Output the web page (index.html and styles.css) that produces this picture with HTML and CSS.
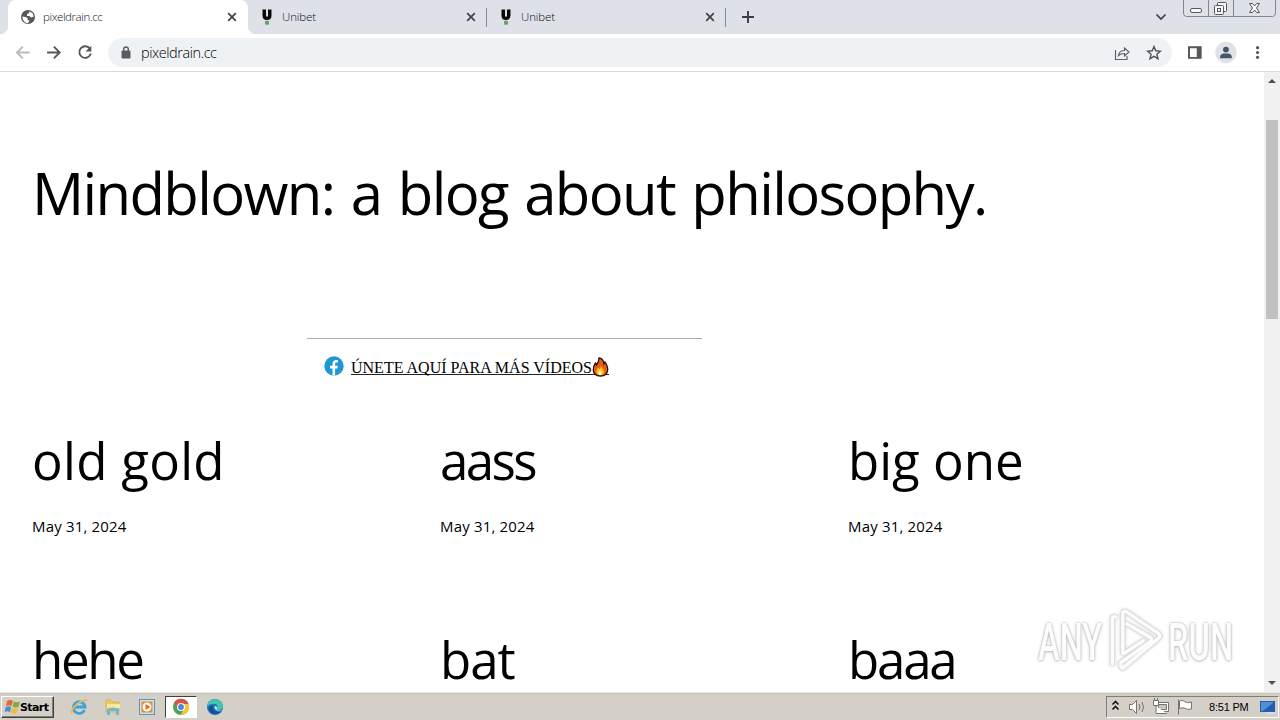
FILE: index.html
```html
<!DOCTYPE html>
<html lang="en">
<head>
<meta charset="utf-8">
<title>pixeldrain.cc</title>
<link rel="stylesheet" href="styles.css">
</head>
<body>
<svg class="defs" width="0" height="0">
  <symbol id="close" viewBox="0 0 10 10"><path d="M1.2 1.2 8.8 8.8M8.8 1.2 1.2 8.8" stroke="#3f4247" stroke-width="1.7" fill="none"/></symbol>
  <symbol id="unibet" viewBox="0 0 16 16"><path d="M3.500 .5H7v6q0 1.300 1 1.300T9 6.500v-6h3.500v6q0 4.500-4.500 4.500T3.500 6.500z" fill="#080808"/><rect x="6" y="11.700" width="4" height="4" rx="1" fill="#62a566"/></symbol>
</svg>
<header class="tabs">
  <div class="tab active">
    <svg class="favicon" viewBox="0 0 16 16"><circle cx="8" cy="8" r="7" fill="#55585c"/><path d="M2.500 7.500 5.500 8l2 1v2l2 .5-1.500 2.700C4.500 14 2.300 11 2.500 7.500zM9 2.500l3.500 1.500 1.300 3.500L11 8.500 9.500 7H7V5l2-.7z" fill="#fff"/></svg>
    <span class="title first-title">pixeldrain.cc</span><svg class="close"><use href="#close"/></svg>
  </div>
  <div class="tab"><svg class="favicon"><use href="#unibet"/></svg><span class="title">Unibet</span><svg class="close"><use href="#close"/></svg></div>
  <div class="tab"><svg class="favicon"><use href="#unibet"/></svg><span class="title">Unibet</span><svg class="close"><use href="#close"/></svg></div>
  <svg class="plus" viewBox="0 0 12 12"><path d="M6 0v12M0 6h12" stroke="#393c42" stroke-width="1.900"/></svg>
  <svg class="chevron" viewBox="0 0 12 8"><path d="m1.500 1.500 4.500 4.500 4.500-4.500" fill="none" stroke="#3e4147" stroke-width="1.700"/></svg>
  <svg class="window-controls" viewBox="0 0 94 18"><path d="M.5 0v13q0 3.500 3 3.500h86q3 0 3-3.500V0M25.500 0v16M50.500 0v16" fill="none" stroke="#83878e"/><g fill="#f7f7f8" stroke="#55585e"><rect x="7.500" y="8.500" width="11" height="4" rx="1.500"/><rect x="34.500" y="2.500" width="9" height="9" rx="1"/><rect x="31.500" y="5.500" width="9" height="9" rx="1"/><rect x="34.500" y="8.500" width="3" height="3"/><path d="M66.500 3.500h3l2 2.500 2-2.500h3L73.500 8l3 4.500h-3l-2-2.500-2 2.500h-3l3-4.500z"/></g></svg>
</header>
<nav class="toolbar">
  <svg class="navicons" viewBox="0 0 100 36"><g fill="none" stroke-width="1.900"><path d="M29 18H16m6-6-6 6 6 6" stroke="#b9babc"/><path d="M47 18h13m-6-6 6 6-6 6" stroke="#55575b"/><path d="M91 14a6 6 0 1 0 1 5" stroke="#55575b"/></g><path d="M92.500 11v6h-6z" fill="#55575b"/></svg>
  <div class="omnibox">
    <svg class="lock" viewBox="0 0 10 13"><rect x=".5" y="4.500" width="9" height="8" rx="1" fill="#595b60"/><path d="M2.700 5V3.300a2.300 2.300 0 0 1 4.600 0V5" fill="none" stroke="#595b60" stroke-width="1.400"/></svg>
    <span class="url">pixeldrain.cc</span>
    <svg class="share" viewBox="0 0 16 16"><path d="M1.500 5v9.500H13V11M4.500 10.500c.5-3.500 2.500-5 6-5V3L15 7l-4.500 4V8.500c-3 0-4.500.5-6 2z" fill="none" stroke="#5f6267" stroke-width="1.200"/></svg>
    <svg class="star" viewBox="0 0 16 16"><path d="m8 1.600 1.800 4.200 4.600.4-3.500 3 1.100 4.500L8 11.300l-4 2.400 1.100-4.500-3.500-3 4.600-.4z" fill="none" stroke="#505359" stroke-width="1.400"/></svg>
  </div>
  <svg class="tools" viewBox="0 0 90 36"><path d="M9 12.500h12v11H9z" fill="#fff" stroke="#55575b" stroke-width="2"/><path d="M17 12h4v12h-4z" fill="#55575b"/><circle cx="47" cy="18" r="11" fill="#dfe2e7"/><circle cx="47" cy="15" r="3" fill="#46536c"/><path d="M41 24v-1.500c0-3 3-3.500 6-3.500s6 .5 6 3.500V24z" fill="#46536c"/><g fill="#505359"><circle cx="79.500" cy="13" r="1.600"/><circle cx="79.500" cy="18" r="1.600"/><circle cx="79.500" cy="23" r="1.600"/></g></svg>
</nav>
<div class="viewport">
  <main>
    <h1>Mindblown: a blog about philosophy.</h1>
    <div class="promo">
      <svg class="facebook" viewBox="0 0 20 20"><circle cx="10" cy="10" r="9.700" fill="#1b98d5"/><path d="M8.500 19.500v-7H6V9.700h2.500V8c0-3 1.500-4.100 3.700-4.100l1.700.2v2.300h-1.300c-1.200 0-1.500.6-1.500 1.500v1.800h2.700l-.5 2.800h-2.200v7z" fill="#fff"/></svg>
      <a href="#">ÚNETE AQUÍ PARA MÁS VÍDEOS<svg class="fire" viewBox="0 0 17 20"><path d="M7 1c4 .5 4.500 3 5 6l1-2c2 3 3 5 2.700 8-.4 4-3 6-7.200 6s-7-2-7.200-6C1 9.500 2.200 8 3.500 6l1 2C6 6 7 4 7 1z" fill="#eb5b14" stroke="#251109" stroke-width="1.300"/><path d="M8.500 8c.2 3 3.500 3 3.500 6.800 0 2.400-1.500 3.500-3.700 3.500S4.500 17 4.500 14.500c0-2 1-3 2-4l.8 1.500C8.500 11 8.800 9.500 8.500 8z" fill="#ffbd20"/><path d="M8 13c2 1.500 2.500 5 .5 5S5.500 16 8 13z" fill="#fff4a0"/></svg></a>
    </div>
    <section class="posts">
      <article><h2 class="t-old">old gold</h2><time>May 31, 2024</time></article>
      <article><h2 class="t-aass">aass</h2><time>May 31, 2024</time></article>
      <article><h2 class="t-big">big one</h2><time>May 31, 2024</time></article>
      <article><h2 class="t-hehe">hehe</h2></article>
      <article><h2 class="t-bat">bat</h2></article>
      <article><h2 class="t-baaa">baaa</h2></article>
    </section>
  </main>
  <aside class="scrollbar"><i class="up"></i><i class="thumb"></i><i class="down"></i></aside>
  <div class="watermark"><span class="mark any">ANY</span><svg viewBox="0 0 64 68"><path d="M8 60V10q0-3 5-1M19 49V5q0-4 4-2l34 23q3 3 0 5L20 62q-3 2-3-2v-3l31-22q3-3 0-5L22 15M19 48l23-15" fill="none" stroke="#dedede" stroke-width="5.500"/><path d="M8 60V10q0-3 5-1M19 49V5q0-4 4-2l34 23q3 3 0 5L20 62q-3 2-3-2v-3l31-22q3-3 0-5L22 15M19 48l23-15" fill="none" stroke="#fcfcfc" stroke-width="3.500"/></svg><span class="mark run">RUN</span></div>
</div>
<footer class="taskbar">
  <button class="start"><svg viewBox="0 0 17 16"><path d="M3 2q3-2 6 0L7.500 7q-3-1.500-5.500 0z" fill="#ed6430"/><path d="M10 2.500q3 1.500 6 0L14.500 8q-3 1-6-.5z" fill="#7cac45"/><path d="M1.700 8q3-1.500 5.500 0L6 13q-3-1.500-5.500 0z" fill="#4692cd"/><path d="M8.200 8.500q3 1.500 6 .5l-1.500 5q-3 1.300-5.900-.5z" fill="#efbd3c"/></svg>Start</button>
  <div class="apps">
    <svg class="app" viewBox="0 0 18 18"><path d="M14.500 12A5.800 5.800 0 1 1 15 9H5" fill="none" stroke="#3ba4dc" stroke-width="2.800"/><path d="M2 16C-1 10 15-1 17 3" fill="none" stroke="#e9b94e" stroke-width="1.700"/></svg>
    <svg class="app" viewBox="0 0 18 18"><path d="M2 2h5l1 2h7v10H2z" fill="#eac960" stroke="#d3b75f"/><path d="M3 6h13v4H3z" fill="#f7e69d"/><path d="M3 17v-6q6-3 12 0v6h-3v-4H6v4z" fill="#74b5d3"/></svg>
    <svg class="app" viewBox="0 0 18 18"><rect x="1.500" y="1.500" width="15" height="15" fill="#c8e1f1" stroke="#5c96bf"/><rect x="3.500" y="3.500" width="11" height="11" fill="#ef8a23"/><circle cx="9" cy="9" r="4.500" fill="#fff"/><path d="m7.500 6 5 3-5 3z" fill="#e76f16"/></svg>
    <span class="selected"><svg class="app" viewBox="0 0 18 18"><circle cx="9" cy="9" r="8" fill="#4aa657"/><path d="M2 5A8 8 0 0 1 16.500 6H9L6 11z" fill="#dd5145"/><path d="M16.500 6A8 8 0 0 1 8.500 17L12 11V6z" fill="#f4c63e"/><circle cx="9" cy="9" r="4" fill="#fff"/><circle cx="9" cy="9" r="2.900" fill="#4687dc"/></svg></span>
    <svg class="app" viewBox="0 0 18 18"><circle cx="9" cy="9" r="8" fill="#1876b9"/><path d="M1.200 8C2-1 16-1 17 8c0 4-4 5-7 3 4-4-1-8-8.800-3z" fill="#42c6ae"/><path d="M7 8c-1 4 2 7 8 5l1-.5C12 18 3 16 3 11c0-3 2-4 4-3z" fill="#164e96"/><path d="M8.500 8.500c2-1 3 1 2 3 2 2 4 1 6 1-3 2-8 0-8-4z" fill="#e7f3f4"/></svg>
  </div>
  <div class="tray">
    <svg class="tray-icons" viewBox="0 0 94 22"><path d="m5.500 8.500 3-3 3 3m-6 5 3-3 3 3" fill="none" stroke="#161616" stroke-width="1.600"/><g stroke="#77746e" fill="#fff"><path d="M22.500 8.500h3l4-4v13l-4-4h-3z"/><path d="M32 8q2 3 0 6m3-8q3 5 0 10" fill="none"/><path d="M49.500 6.500h12v9h-12z"/><path d="M51.500 8.500h8v5h-8z" fill="#c9c6bf"/><path d="M46.500 4.500h5v5h-5zM47.500 2v2m3-2v2M49 10v7.500h11" /><path d="M71.500 3.500v15M72.500 5q3-1.500 5 .5t7 .5v7q-4 1-6-.5t-6 0z"/></g></svg>
    <span class="clock">8:51 PM</span>
    <svg class="desktop" viewBox="0 0 16 16"><path d="M0 2h15v11H0z" fill="#265eae"/><path d="M1 3h13L3 12H1z" fill="#4d91d6"/><path d="M7 13h8v2H7z" fill="#d3ddec"/></svg>
  </div>
</footer>
</body>
</html>
```
FILE: styles.css
```css
*{box-sizing:border-box}
body{margin:0;width:1280px;height:720px;overflow:hidden;display:flex;flex-direction:column;background:#fff;color:#000;font-family:"Open Sans","Noto Sans",sans-serif}
svg{display:block;flex:none}
.defs{position:absolute}
.tabs{height:34px;flex:none;display:flex;background:#dee1e8}
.tab{width:239px;height:34px;display:flex;align-items:center;padding-left:11px;border-radius:8px 8px 0 0;position:relative}
.tab:not(.active)::after{content:"";position:absolute;right:0;top:8px;width:1px;height:19px;background:#878b93}
.tab.active{width:240px;margin-left:8px;padding-left:12px;background:#fff}
.tab.active::before,.tab.active::after{content:"";position:absolute;width:8px;height:8px;bottom:0}
.tab.active::before{left:-8px;background:radial-gradient(circle at 0 0,#dee1e8 8px,#fff 8.5px)}
.tab.active::after{right:-8px;background:radial-gradient(circle at 100% 0,#dee1e8 8px,#fff 8.5px)}
.favicon{width:16px;height:16px}
.title{margin-left:7px;font-size:11.500px;line-height:16px;color:#101216;width:185px;font-weight:300;letter-spacing:-.1px}
.first-title{letter-spacing:-.4px;font-size:11.500px}
.close{width:10px;height:10px;margin-left:-1px}
.plus{width:12px;height:12px;margin:11px 0 0 16px}
.chevron{width:12px;height:8px;margin:13px 0 0 auto}
.window-controls{width:94px;height:18px;margin:0 3px 0 16px}
.toolbar{height:38px;flex:none;display:flex;align-items:center;border-bottom:1px solid #d9dadc;background:#fff}
.navicons{width:100px;height:36px;margin-right:8px;padding-bottom:1px}
.omnibox{width:1064px;height:29px;display:flex;align-items:center;border-radius:15px;background:#eff2f5}
.lock{width:10px;height:13px;margin-left:13px}
.url{font-size:14.500px;line-height:20px;margin-left:10px;font-weight:300;letter-spacing:-.45px;color:#000}
.share{width:16px;height:16px;margin-left:auto;margin-right:16px}
.star{width:16px;height:16px;margin-right:10px}
.tools{width:90px;height:36px;margin-left:7px;padding-bottom:1px}
.viewport{height:620px;flex:none;display:flex;position:relative;overflow:hidden}
main{width:1264px}
h1{font-size:58px;font-weight:400;line-height:80px;height:80px;margin:81px 0 0 32px;white-space:nowrap;letter-spacing:-1.63px;word-spacing:3px}
.promo{width:395px;height:53px;margin:105px 0 0 307px;border-top:1px solid #aaa;display:flex;padding:17px 0 0 17px;font-family:"Liberation Serif",serif;font-size:16px}
.facebook{width:20px;height:20px;margin-right:7px}
.promo a{display:flex;color:#000;text-decoration:none;height:19px;line-height:24px;border-bottom:1px solid #222;white-space:nowrap}
.fire{width:17px;height:20px;margin-top:1px}
.posts{display:grid;grid-template-columns:repeat(3,408px);grid-template-rows:199px 120px;margin:37px 0 0 32px}
h2{font-size:51px;font-weight:400;line-height:58px;height:64px;padding-top:3px;margin:0;white-space:nowrap}
.t-old{letter-spacing:.3px}
.t-aass{letter-spacing:-2.6px}
.t-hehe{letter-spacing:-2.3px}
.t-bat{letter-spacing:-1px}
.t-baaa{letter-spacing:-2.2px}
time{display:block;margin-top:24px;font-size:15px;line-height:20px;letter-spacing:.17px}
.scrollbar{width:16px;height:620px;background:#f1f1f1;position:relative}
.scrollbar i{position:absolute;left:2px;width:12px}
.thumb{top:48px;height:199px;background:#c1c1c1}
.scrollbar .up,.scrollbar .down{left:4px;width:0;height:0;border:4px solid transparent}
.scrollbar .up{top:3px;border-bottom-color:#505050}
.scrollbar .down{bottom:3px;border-top-color:#505050}
.watermark{position:absolute;left:1038px;top:537px;width:196px;height:68px;display:flex}
.watermark svg{width:62px;height:64px;margin-left:66px;filter:drop-shadow(0 0 1.5px #ccc)}
.mark{position:absolute;top:8px;font-family:Roboto,sans-serif;font-weight:500;font-size:51px;line-height:51px;color:#fdfdfd;text-shadow:0 0 3px #aaa,0 1px 4px #ccc;transform-origin:left;transform:scaleX(.64)}
.any{left:0}
.run{left:130px}
.taskbar{height:28px;flex:none;display:flex;align-items:center;background:#d4d0c8;border-top:1px solid #e9e7e2;box-shadow:inset 0 1px #c9c5bd}
.start{display:flex;align-items:center;width:53px;height:22px;margin:1px 0 0 1px;padding:0 0 0 2px;border:1px solid;border-color:#fff #404040 #404040 #fff;box-shadow:inset -1px -1px #858078;background:#d4d0c8;color:#000;font:bold 11px "DejaVu Sans",sans-serif;letter-spacing:-.6px}
.start svg{width:17px;height:16px;margin-right:-1px}
.apps{display:flex;align-items:center;margin-left:16px;height:26px;padding-top:1px}
.app{width:18px;height:18px;margin-right:16px}
.selected{width:32px;height:22px;margin:0 9px 0 -7px;padding:1px 6px;background:#fff;border:1px solid;border-color:#404040 #fff #fff #404040}
.selected .app{margin:0}
.tray{width:173px;height:22px;margin:1px 1px 0 auto;display:flex;align-items:center;border:1px solid;border-color:#817d76 #fff #fff #817d76}
.tray-icons{width:94px;height:22px}
.clock{width:50px;margin-left:8px;font:11px "Liberation Sans",sans-serif;white-space:nowrap;letter-spacing:-.2px}
.desktop{width:16px;height:16px;margin-left:1px}
```
